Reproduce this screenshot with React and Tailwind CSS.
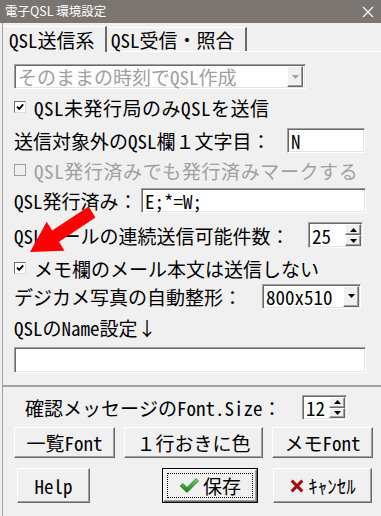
const sunken =
  "border border-t-[#a0a0a0] border-l-[#a0a0a0] border-r-white border-b-white shadow-[inset_1px_1px_0_#696969,inset_-1px_-1px_0_#e3e3e3]";
const raised =
  "border border-t-white border-l-white border-r-[#696969] border-b-[#696969] shadow-[inset_-1px_-1px_0_#a0a0a0]";

const Tri = ({ up, color = "#000" }) => (
  <svg width="7" height="4" viewBox="0 0 7 4">
    <polygon points={up ? "3.5,0 7,4 0,4" : "0,0 7,0 3.5,4"} fill={color} />
  </svg>
);

const Check = ({ checked, disabled }) => (
  <div
    className={`w-[12px] h-[12px] flex-none flex items-center justify-center ${
      disabled
        ? "border border-[#a0a0a0] bg-[#f0f0f0]"
        : "border border-t-[#6d6d6d] border-l-[#6d6d6d] border-r-[#dcdcdc] border-b-[#dcdcdc] bg-white"
    }`}
  >
    {checked && (
      <svg width="8" height="8" viewBox="0 0 8 8">
        <path d="M1 3.6 L3.2 5.8 L7.2 1.4" stroke="#000" strokeWidth="1.9" fill="none" />
      </svg>
    )}
  </div>
);

const Spin = () => (
  <div className="flex flex-col w-[16px] h-full flex-none">
    <div className={`flex-1 flex items-center justify-center bg-[#f0f0f0] ${raised}`}>
      <Tri up />
    </div>
    <div className={`flex-1 flex items-center justify-center bg-[#f0f0f0] ${raised}`}>
      <Tri />
    </div>
  </div>
);

const DropBtn = ({ disabled }) => (
  <div className={`w-[16px] h-full flex-none flex items-center justify-center bg-[#f0f0f0] ${raised}`}>
    <Tri color={disabled ? "#a0a0a0" : "#000"} />
  </div>
);

const Button = ({ className = "", children }) => (
  <div className={`h-full flex items-center justify-center bg-[#f0f0f0] ${raised} ${className}`}>
    {children}
  </div>
);

export default function App() {
  return (
    <div className="relative w-[381px] h-[516px] overflow-hidden bg-[#f0f0f0] text-black text-[19px] leading-none font-['Noto_Sans_Mono_CJK_JP','Liberation_Mono','Noto_Sans_CJK_JP',monospace]">
      {/* title bar */}
      <div className="h-[23px] bg-[#7b7572] flex items-center justify-between pl-[5px] pr-[7px]">
        <span className="text-white text-[12.5px] font-['Noto_Sans_CJK_JP',sans-serif]">電子QSL 環境設定</span>
        <svg width="12" height="12" viewBox="0 0 12 12">
          <path d="M1 1 L11 11 M11 1 L1 11" stroke="#fff" strokeWidth="1.2" />
        </svg>
      </div>

      <div className="ml-[2px] border-l border-[#a0a0a0] h-[493px] flex flex-col">
        {/* tabs */}
        <div className="h-[29px] flex items-end border-b border-white">
          <div className="relative -mb-px h-[26px] w-[104px] flex items-center pl-[6px] bg-[#f0f0f0] border-t border-white border-r-2 border-r-[#696969]">
            QSL送信系
          </div>
          <div className="h-[24px] w-[140px] flex items-center pl-[4px] border-t border-white border-r-2 border-r-[#696969]">
            QSL受信・照合
          </div>
        </div>

        {/* tab page */}
        <div className="h-[335px] flex flex-col pl-[11px] pt-[12px] border-b-2 border-b-[#a0a0a0]">
          <div className={`h-[25px] w-[292px] flex items-center bg-white pl-[3px] pr-[2px] ${sunken}`}>
            <span className="flex-1 text-[#a0a0a0]">そのままの時刻でQSL作成</span>
            <div className="h-[21px]">
              <DropBtn disabled />
            </div>
          </div>

          <div className="h-[36px] flex items-center">
            <Check checked />
            <span className="ml-[8px] tracking-[0.5px]">QSL未発行局のみQSLを送信</span>
          </div>

          <div className="h-[30px] flex items-center">
            <span className="w-[273px] whitespace-nowrap">送信対象外のQSL欄１文字目：</span>
            <div className={`h-[25px] w-[78px] flex items-center bg-white pl-[3px] ${sunken}`}>N</div>
          </div>

          <div className="h-[30px] flex items-center text-[#a0a0a0]">
            <Check disabled />
            <span className="ml-[8px] tracking-[0.6px] whitespace-nowrap">QSL発行済みでも発行済みマークする</span>
          </div>

          <div className="h-[30px] flex items-center">
            <span className="w-[127px] whitespace-nowrap">QSL発行済み：</span>
            <div className={`h-[25px] w-[225px] flex items-center bg-white pl-[3px] ${sunken}`}>E;*=W;</div>
          </div>

          <div className="h-[40px] flex items-center">
            <span className="w-[294px] whitespace-nowrap">QSLメールの連続送信可能件数：</span>
            <div className={`h-[26px] w-[55px] flex items-center bg-white pl-[3px] pr-px ${sunken}`}>
              <span className="flex-1">25</span>
              <div className="h-[22px]">
                <Spin />
              </div>
            </div>
          </div>

          <div className="h-[26px] flex items-center">
            <Check checked />
            <span className="ml-[8px]">メモ欄のメール本文は送信しない</span>
          </div>

          <div className="h-[30px] flex items-center">
            <span className="w-[248px] whitespace-nowrap">デジカメ写真の自動整形：</span>
            <div className={`h-[25px] w-[99px] flex items-center bg-white pl-[3px] pr-px ${sunken}`}>
              <span className="flex-1">800x510</span>
              <div className="h-[21px]">
                <DropBtn />
              </div>
            </div>
          </div>

          <div className="h-[32px] flex items-center">QSLのName設定↓</div>

          <div className={`mt-[4px] h-[26px] w-[352px] bg-white ${sunken}`} />
        </div>

        {/* lower area */}
        <div className="flex flex-col pt-[8px]">
          <div className="h-[25px] flex items-center">
            <span className="ml-[22px] w-[277px] whitespace-nowrap">確認メッセージのFont.Size：</span>
            <div className={`h-[25px] w-[45px] flex items-center bg-white pl-[3px] pr-px ${sunken}`}>
              <span className="flex-1">12</span>
              <div className="h-[21px]">
                <Spin />
              </div>
            </div>
          </div>

          <div className="mt-[7px] h-[31px] flex">
            <Button className="ml-[11px] w-[101px]">一覧Font</Button>
            <Button className="ml-[9px] w-[139px]">１行おきに色</Button>
            <Button className="ml-[9px] w-[101px]">メモFont</Button>
          </div>

          <div className="mt-[10px] h-[35px] flex">
            <Button className="ml-[14px] w-[73px]">Help</Button>
            <div className="ml-[72px] w-[96px] h-full border border-black">
              <div className={`h-full flex items-center justify-center p-[3px] bg-[#f0f0f0] ${raised}`}>
                <div className="w-full h-full flex items-center justify-center gap-[4px] border border-dotted border-black">
                  <svg width="20" height="18" viewBox="0 0 20 18">
                    <defs>
                      <linearGradient id="gck" x1="0" y1="0" x2="0" y2="1">
                        <stop offset="0" stopColor="#7ad36a" />
                        <stop offset="1" stopColor="#137a14" />
                      </linearGradient>
                    </defs>
                    <path d="M1 9 L4 6.5 L8 10.5 L17 1.5 L19.5 4 L8 15.5 Z" fill="url(#gck)" stroke="#0d5e10" strokeWidth="0.6" />
                  </svg>
                  <span>保存</span>
                </div>
              </div>
            </div>
            <Button className="ml-[15px] w-[99px] gap-[3px]">
              <svg width="16" height="16" viewBox="0 0 15 15">
                <path d="M1.5 3.5 L3.5 1.5 L7.5 5.5 L11.5 1.5 L13.5 3.5 L9.5 7.5 L13.5 11.5 L11.5 13.5 L7.5 9.5 L3.5 13.5 L1.5 11.5 L5.5 7.5 Z" fill="#a30d0d" />
              </svg>
              <span>ｷｬﾝｾﾙ</span>
            </Button>
          </div>
        </div>
      </div>

      {/* red annotation arrow */}
      <svg className="absolute left-0 top-0 pointer-events-none" width="381" height="516" viewBox="0 0 381 516">
        <polygon
          points="30,252 46.7,221.7 52.2,230.6 88.6,206.4 95.4,217.6 59,241.8 64.5,250.7"
          fill="#ff0000"
        />
      </svg>
    </div>
  );
}
